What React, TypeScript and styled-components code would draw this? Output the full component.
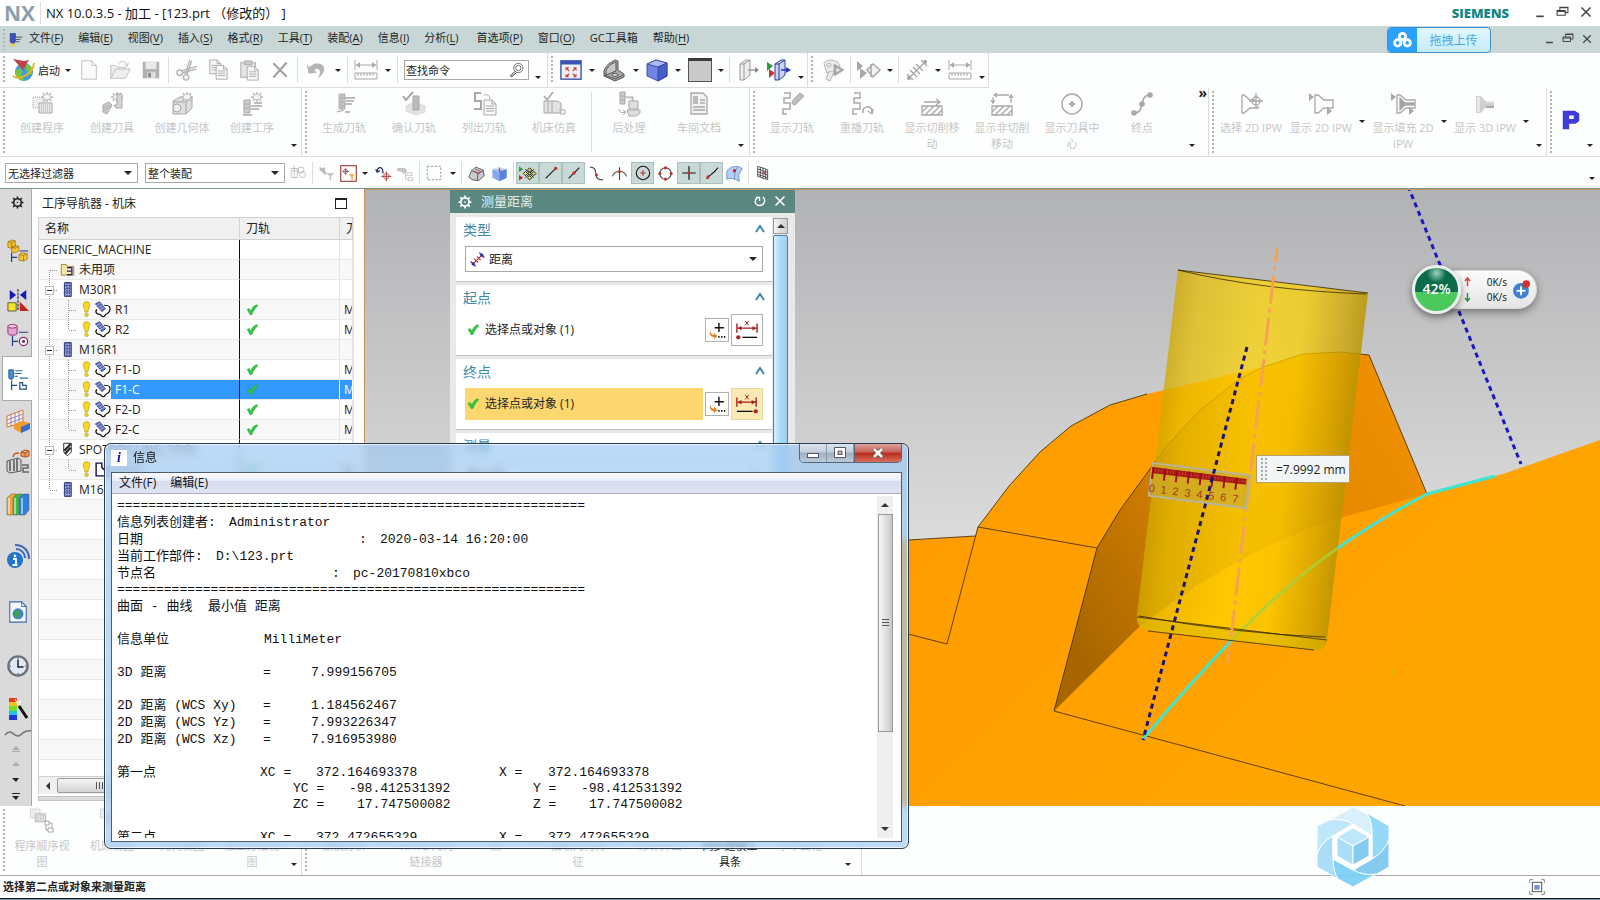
import React from "react";
import styled, { createGlobalStyle, css } from "styled-components";

const ui = `"Open Sans", "Noto Sans CJK SC", sans-serif`;
const mono = `"Liberation Mono", "Noto Sans CJK SC", monospace`;

const Global = createGlobalStyle`
  * { box-sizing: border-box; }
  body { margin: 0; background: #fdfefe; font-family: ${ui}; font-size: 11px; color: #222; overflow: hidden; }
  button, select, input { font-family: inherit; font-size: inherit; color: inherit; }
  button { background: none; border: 0; padding: 0; }
`;

/* ---------- shell ---------- */
const Shell = styled.div`
  display: flex;
  flex-direction: column;
  min-height: 100vh;
`;

const TitleBar = styled.header`
  display: flex;
  align-items: center;
  height: 26px;
  padding-left: 4px;
  background: #fff;
`;
const NxMark = styled.span`
  width: 37px;
  margin-right: 5px;
  border-right: 1px solid #dcdcdc;
  font: 700 21px/22px "Open Sans", sans-serif;
  color: #8c9fb0;
`;
const TitleText = styled.h1`
  flex: 1;
  margin: 0;
  font-size: 13px;
  line-height: 20px;
  font-weight: 400;
  white-space: pre;
  color: #111;
`;
const Brand = styled.span`
  margin-right: 26px;
  font: 800 13px/20px "Open Sans", sans-serif;
  color: #118886;
`;
const WinButtons = styled.div<{ $gap: number }>`
  display: flex;
  align-items: center;
  gap: ${(p) => p.$gap}px;
  padding-right: 8px;
  color: #444;
`;

const MenuBar = styled.nav`
  display: flex;
  align-items: center;
  height: 27px;
  background: #c8d7d6;
`;
const MenuItems = styled.div`
  display: flex;
  flex: 1;
  gap: 15px;
  padding: 0 0 4px 6px;
`;
const MenuItem = styled.button<{ $wide?: boolean }>`
  line-height: 20px;
  white-space: nowrap;
  margin-left: ${(p) => (p.$wide ? 3 : 0)}px;
  u { text-underline-offset: 2px; }
`;
const Upload = styled.button`
  display: flex;
  align-items: center;
  width: 104px;
  height: 26px;
  margin: 1px 54px 0 0;
  border: 1px solid #3c8fd0;
  border-radius: 4px;
  overflow: hidden;
  background: linear-gradient(#e2f7ff, #c6ebfb);
  color: #4aa9dc;
  font-size: 12px;
  span { flex: 1; }
`;
const UploadMark = styled.i`
  display: grid;
  place-items: center;
  width: 29px;
  height: 26px;
  background: #2aa2fb;
`;

/* ---------- toolbars ---------- */
const Bar = styled.div<{ $h: number; $line?: boolean }>`
  display: flex;
  flex-shrink: 0;
  height: ${(p) => p.$h}px;
  border-bottom: ${(p) => (p.$line ? "1px solid #dedede" : "0")};
`;
const Group = styled.div<{ $line?: boolean }>`
  display: flex;
  align-items: center;
  border-right: 1px solid #dcdcdc;
  border-bottom: ${(p) => (p.$line ? "1px solid #dcdcdc" : "0")};
`;
const Grip = styled.i<{ $w?: number }>`
  align-self: stretch;
  width: ${(p) => p.$w ?? 9}px;
  margin: 3px 0;
  background: repeating-linear-gradient(#b4b4b4 0 2px, transparent 2px 4px) 3px 0 / 2px 100% no-repeat;
`;
const Tool = styled.button<{ $w?: number; $on?: boolean }>`
  display: grid;
  place-items: center;
  width: ${(p) => p.$w ?? 31}px;
  height: 24px;
  ${(p) =>
    p.$on &&
    css`
      height: 22px;
      background: #c9d9d8;
      border: 1px solid #a9c2c0;
    `}
`;
const Launch = styled.button`
  display: flex;
  align-items: center;
  width: 64px;
  padding-left: 2px;
  gap: 3px;
  white-space: nowrap;
`;
const Sep = styled.i<{ $w?: number }>`
  align-self: stretch;
  width: 1px;
  margin: 4px ${(p) => p.$w ?? 2}px;
  background: #dcdcdc;
`;
const Drop = styled.button<{ $w?: number; $low?: boolean }>`
  display: flex;
  justify-content: center;
  align-self: ${(p) => (p.$low ? "flex-end" : "center")};
  width: ${(p) => p.$w ?? 12}px;
  padding-bottom: ${(p) => (p.$low ? 8 : 0)}px;
  &::before {
    content: "";
    border: solid transparent;
    border-width: 3px 3px 0;
    border-top-color: #222;
  }
`;
const Search = styled.label`
  display: flex;
  align-items: center;
  width: 125px;
  height: 20px;
  margin-left: 4px;
  border: 1px solid #a8a8a8;
  background: #fff;
  input { width: 104px; border: 0; padding: 0 1px; outline: 0; background: none; }
  input::placeholder { color: #222; opacity: 1; }
`;

const Feature = styled.button<{ $dark?: boolean }>`
  display: flex;
  flex-direction: column;
  align-items: center;
  align-self: flex-start;
  width: 70px;
  padding: 4px 3px 0;
  gap: 4px;
  line-height: 16px;
  color: ${(p) => (p.$dark ? "#222" : "#c6c6c6")};
`;
const SideDrop = styled(Drop)`
  align-self: flex-start;
  padding-top: 32px;
`;
const GroupEnd = styled.div<{ $w: number }>`
  display: flex;
  flex-direction: column;
  align-self: stretch;
  justify-content: space-between;
  align-items: flex-end;
  width: ${(p) => p.$w}px;
  padding: 0 1px 9px 0;
  font: 700 14px/10px "Open Sans", sans-serif;
`;
const Macro = styled.button`
  align-self: flex-start;
  width: 20px;
  padding-top: 21px;
  margin-left: 6px;
`;

const Combo = styled.label<{ $w: number; $h: number; $gap?: boolean }>`
  display: flex;
  align-items: center;
  width: ${(p) => p.$w}px;
  height: ${(p) => p.$h}px;
  margin-left: ${(p) => (p.$gap ? 7 : 0)}px;
  border: 1px solid #a8a8a8;
  background: #fff;
  select {
    flex: 1;
    height: 100%;
    padding: 0 2px;
    border: 0;
    outline: 0;
    appearance: none;
    background: none;
  }
  svg { margin: 0 2px 0 4px; }
  &::after {
    content: "";
    margin-right: 5px;
    border: solid transparent;
    border-width: 4px 4px 0;
    border-top-color: #222;
  }
`;
const TypeCombo = styled(Combo)`
  font-size: 12px;
`;
const SelectBar = styled(Bar)`
  align-items: center;
  padding: 1px 2px 0 5px;
`;
const Push = styled.i`
  flex: 1;
`;

/* ---------- main area ---------- */
const Main = styled.main`
  position: relative;
  display: flex;
  flex: 1;
  min-height: 0;
  border-top: 1px solid #7d9490;
`;
const Rail = styled.aside`
  display: flex;
  flex-direction: column;
  width: 32px;
  background: #dadada;
  border-right: 1px solid #a9a9a9;
`;
const RailTab = styled.button<{ $h: number; $on?: boolean }>`
  display: grid;
  place-items: center;
  height: ${(p) => p.$h}px;
  padding-left: 4px;
  ${(p) =>
    p.$on &&
    css`
      margin: 0 -1px 0 2px;
      padding-left: 0;
      background: #fff;
      border: solid #a9a9a9;
      border-width: 1px 0 1px 1px;
    `}
`;
const Navigator = styled.section`
  display: flex;
  flex-direction: column;
  width: 332px;
  padding: 0 10px 5px 6px;
  background: #fff;
`;
const NavTitle = styled.h2`
  display: flex;
  align-items: center;
  justify-content: space-between;
  height: 28px;
  margin: 0;
  padding: 0 7px 0 4px;
  font-size: 12px;
  font-weight: 400;
  i { width: 12px; height: 11px; border: 1px solid #222; border-top-width: 2px; }
`;
const TreeBox = styled.div`
  flex: 1;
  overflow: hidden;
  border: 1px solid #d0d0d0;
  border-right-color: #e2e2e2;
`;
const Tree = styled.table`
  width: 100%;
  table-layout: fixed;
  border-collapse: separate;
  border-spacing: 0;
  font-size: 12px;
  line-height: 19px;
  th {
    height: 22px;
    padding: 0 6px;
    background: #f0f0f0;
    border-right: 1px solid #d4d4d4;
    border-bottom: 1px solid #d0d0d0;
    font-weight: 400;
    text-align: left;
    overflow: hidden;
    white-space: nowrap;
  }
  td {
    height: 20px;
    padding: 0;
    border-bottom: 1px solid #e9e9e9;
    border-right: 1px solid #e4e4e4;
    overflow: hidden;
    white-space: nowrap;
  }
  td:first-child { border-right: 1px solid #111; }
  tr:nth-child(even) td { background: #f8f8f8; }
`;
const TreeRow = styled.tr<{ $sel?: boolean }>`
  ${(p) =>
    p.$sel &&
    css`
      && td + td { background: #3399ff; color: #fff; border-right-color: #fff; }
    `}
`;
const NodeCell = styled.div`
  display: flex;
  align-items: center;
  height: 19px;
`;
const CheckCell = styled(NodeCell)`
  padding-left: 6px;
`;
const NodeLabel = styled.span<{ $sel?: boolean }>`
  flex: 1;
  padding: 0 4px;
  background: ${(p) => (p.$sel ? "#3399ff" : "transparent")};
  color: ${(p) => (p.$sel ? "#fff" : "#222")};
`;
const HScroll = styled.div`
  display: flex;
  align-items: center;
  height: 17px;
  background: #f0f0f0;
  border: 1px solid #d0d0d0;
  border-width: 0 1px;
  i {
    width: 18px;
    display: flex;
    justify-content: center;
  }
  i::before {
    content: "";
    border: solid transparent;
    border-width: 4px 4px 4px 0;
    border-right-color: #333;
  }
  b {
    display: grid;
    place-items: center;
    width: 84px;
    height: 15px;
    border: 1px solid #9a9a9a;
    border-radius: 2px;
    background: linear-gradient(#f6f6f6, #d2d2d2);
  }
  b::before {
    content: "";
    width: 7px;
    height: 7px;
    background: repeating-linear-gradient(90deg, #555 0 1px, transparent 1px 3px);
  }
`;
const NavFoot = styled.div`
  height: 5px;
  margin-top: 2px;
  background: #dcdcdc;
  border: 1px solid #c2c2c2;
`;

const Viewport = styled.section`
  position: relative;
  flex: 1;
  overflow: hidden;
  border-left: 1px solid #c8945c;
  border-top: 1px solid #c8945c;
  background: linear-gradient(#b1b2b4, #dedede 60%);
`;
const Scene = styled.svg`
  display: block;
  position: absolute;
  width: 100%;
  height: 100%;
`;
const Readout = styled.output`
  position: absolute;
  top: 265px;
  right: 250px;
  display: flex;
  align-items: center;
  gap: 8px;
  width: 94px;
  height: 28px;
  padding-left: 3px;
  border: 1px solid #b4a070;
  background: #f2f5f6;
  font-size: 12px;
  white-space: nowrap;
  i { width: 8px; height: 24px; background: radial-gradient(circle, #aaa 1px, transparent 1px) 0 0 / 4px 4px; }
`;
const NetWidget = styled.div`
  position: absolute;
  top: 80px;
  right: 63px;
  display: flex;
  align-items: center;
  width: 102px;
  height: 39px;
  padding: 0 6px 0 28px;
  border: 1px solid #d8d8d8;
  border-radius: 20px;
  background: linear-gradient(#fcfcfc, #e4e4e4);
  box-shadow: 0 3px 8px rgba(0, 0, 0, 0.4);
`;
const Ball = styled.strong`
  position: absolute;
  left: -24px;
  top: -6px;
  width: 49px;
  height: 49px;
  border: 3px solid #eaf2ec;
  border-radius: 50%;
  background: radial-gradient(circle at 50% 12%, #9fd4bd 0, transparent 22%), linear-gradient(#0b6b4a 0 56%, #4cc95d 56%);
  box-shadow: 0 3px 7px rgba(0, 0, 0, 0.45);
  color: #fff;
  font: 600 14px/42px "Open Sans", sans-serif;
  text-align: center;
`;
const Rates = styled.div`
  flex: 1;
  font-size: 10px;
  line-height: 15px;
  color: #111;
  div { display: flex; justify-content: space-between; padding-right: 5px; }
`;

/* ---------- measure dialog ---------- */
const Dialog = styled.section`
  position: absolute;
  left: 85px;
  top: 0;
  width: 345px;
  height: 330px;
  display: flex;
  flex-direction: column;
  background: #e9e9e9;
`;
const DialogTitle = styled.h2`
  display: flex;
  align-items: center;
  height: 23px;
  margin: 0;
  padding: 0 9px 0 8px;
  gap: 8px;
  background: #5b8781;
  color: #fff;
  font-size: 13px;
  line-height: 20px;
  font-weight: 400;
  span { flex: 1; color: #e4eeec; padding: 0 0 2px 1px; }
`;
const DialogBody = styled.div`
  display: flex;
  flex: 1;
  min-height: 0;
  padding: 4px 7px 0 6px;
`;
const Sections = styled.div`
  display: flex;
  flex: 1;
  flex-direction: column;
  gap: 3px;
  margin-right: 1px;
`;
const Section = styled.div<{ $h: number }>`
  flex-shrink: 0;
  height: ${(p) => p.$h}px;
  padding: 0 9px;
  background: #fff;
  border-bottom: 1px solid #c2c2c2;
`;
const SectionHead = styled.h3`
  display: flex;
  justify-content: space-between;
  align-items: center;
  height: 24px;
  margin: 0 -3px 5px -2px;
  font-size: 14px;
  font-weight: 400;
  color: #3f87a8;
`;
const PickRow = styled.div`
  display: flex;
  align-items: center;
  gap: 2px;
  height: 32px;
`;
const Pick = styled.button<{ $on?: boolean }>`
  display: flex;
  align-items: center;
  flex: 1;
  gap: 5px;
  height: 32px;
  padding: 0 0 2px 2px;
  background: ${(p) => (p.$on ? "#fcd770" : "none")};
  font-size: 12px;
`;
const BoxButton = styled.button<{ $s: number; $on?: boolean }>`
  display: grid;
  place-items: center;
  width: ${(p) => p.$s}px;
  height: ${(p) => p.$s}px;
  border: 1px solid ${(p) => (p.$on ? "#e8d9a0" : "#b0b0b0")};
  background: ${(p) => (p.$on ? "#f9eab5" : "#fff")};
`;
const Arrow = styled.i<{ $down?: boolean }>`
  display: grid;
  place-items: center;
  &::before {
    content: "";
    border: solid transparent;
    border-width: ${(p) => (p.$down ? "4px 4px 0" : "0 4px 4px")};
    border-top-color: ${(p) => (p.$down ? "#333" : "transparent")};
    border-bottom-color: ${(p) => (p.$down ? "transparent" : "#333")};
  }
`;
const DialogScroll = styled.div`
  width: 15px;
  display: flex;
  flex-direction: column;
  gap: 1px;
  padding-top: 1px;
  ${Arrow} { height: 16px; border: 1px solid #9a9a9a; background: linear-gradient(90deg, #f4f4f4, #cfcfcf); }
  b { flex: 1; border: 1px solid #49809f; border-radius: 2px; background: linear-gradient(90deg, #d8f0fc, #a6dcf7 50%, #a2d0ee); }
`;

/* ---------- information window ---------- */
const InfoWindow = styled.section`
  position: absolute;
  left: 104px;
  top: 254px;
  z-index: 5;
  display: flex;
  flex-direction: column;
  width: 805px;
  height: 406px;
  padding: 0 6px 6px;
  border: 1px solid #2a3b4d;
  border-radius: 7px;
  background: rgba(158, 200, 242, 0.68);
  backdrop-filter: blur(4px);
  box-shadow: inset 0 0 0 1px rgba(255, 255, 255, 0.7);
`;
const InfoTitle = styled.h2`
  display: flex;
  align-items: center;
  height: 28px;
  margin: 0;
  gap: 6px;
  font-size: 12px;
  font-weight: 400;
  color: #111;
  em { width: 16px; height: 16px; background: #fff; color: #1414b0; font: italic 700 14px/15px "Liberation Serif", serif; text-align: center; }
  span { flex: 1; padding-bottom: 2px; }
`;
const Caption = styled.div`
  display: flex;
  align-self: flex-start;
  border: 1px solid #55677a;
  border-top: 0;
  border-radius: 0 0 5px 5px;
  overflow: hidden;
`;
const CaptionButton = styled.button<{ $close?: boolean }>`
  display: grid;
  place-items: center;
  width: ${(p) => (p.$close ? 47 : 27)}px;
  height: 18px;
  border-left: ${(p) => (p.$close ? 1 : 0)}px solid #55677a;
  border-right: ${(p) => (p.$close ? 0 : 1)}px solid #8a9aaa;
  background: ${(p) =>
    p.$close ? "linear-gradient(#dca19a, #c8635a 45%, #b62c1c 50%, #d8705c)" : "linear-gradient(#dbe4ee, #c2cedb 45%, #9fb0c2 50%, #bccad8)"};
`;
const InfoFrame = styled.div`
  display: flex;
  flex: 1;
  flex-direction: column;
  min-height: 0;
  border: 1px solid #4b5d6e;
  background: #fff;
`;
const InfoMenu = styled.nav`
  display: flex;
  gap: 14px;
  height: 21px;
  padding-left: 7px;
  border-bottom: 1px solid #a8adb8;
  background: linear-gradient(#fbfcfe, #e8ecf7 40%, #d6dcee 42%, #e0e5f4);
  font-size: 12px;
  color: #111;
  button { line-height: 20px; }
`;
const InfoBody = styled.div`
  display: flex;
  flex: 1;
  min-height: 0;
  padding: 2px 8px 3px 5px;
`;
const Listing = styled.div`
  flex: 1;
  overflow: hidden;
  font-family: ${mono};
  font-size: 13px;
  color: #111;
  padding-top: 2px;
`;
const Line = styled.div<{ $h: number }>`
  display: flex;
  height: ${(p) => p.$h}px;
  line-height: ${(p) => p.$h}px;
  white-space: pre;
`;
const Col = styled.span<{ $w: number }>`
  flex-shrink: 0;
  width: ${(p) => p.$w}px;
`;
const InfoScroll = styled.div`
  display: flex;
  flex-direction: column;
  align-items: center;
  width: 16px;
  background: #efefef;
  ${Arrow} { height: 18px; }
  b {
    display: grid;
    place-items: center;
    width: 15px;
    height: 218px;
    border: 1px solid #999;
    background: linear-gradient(90deg, #f6f6f6, #dcdcdc 60%, #c4c4c4);
  }
  b::before { content: ""; width: 7px; height: 8px; background: repeating-linear-gradient(#555 0 1px, transparent 1px 3px); }
`;

/* ---------- footer ---------- */
const Footer = styled.footer`
  position: relative;
`;
const BottomBar = styled(Bar)`
  border-bottom: 1px solid #ababab;
`;
const Status = styled.div`
  display: flex;
  align-items: center;
  justify-content: space-between;
  height: 22px;
  padding: 0 55px 0 3px;
  font-weight: 600;
`;
const StatusText = styled.span`
  padding-bottom: 2px;
`;
const TaskEdge = styled.div`
  height: 2px;
  border-top: 1px solid #0c1622;
  background: #7e97ac;
`;
const HexMark = styled.svg`
  position: absolute;
  right: 210px;
  top: 0;
  z-index: 2;
  opacity: 0.9;
`;

/* ---------- icons ---------- */
const G = "#a8a8a8";
const L = "#dadada";
type IconProps = { n: string; s?: number };

const star = <path d="M12 1l1 3 3-2-1 3 3 1-3 1 1 3-3-2-1 3-1-3-3 2 1-3-3-1 3-1-1-3 3 2z" fill="#f4f4f4" stroke={G} strokeWidth=".7" />;
const starR = <g transform="translate(5 -1)">{star}</g>;
const squig = <path d="M4 1h6v5H4v5h6v6H3v5h4" fill="none" stroke={G} strokeWidth="1.5" />;
const cutter = <path d="M7 2h6v15H7z M7 6h6M7 10h6M7 14h6M10 2v15" fill="#c8c8c8" stroke={G} strokeWidth=".8" />;
const spin = <path d="M3 3h3l6 5h9v8h-9l-6 5H3z" />;
const tick = <path d="M2 12l4-2 3 5c2-6 6-11 11-12l2 2c-5 4-8 9-11 16l-3 1z" />;
const tri = (x: number, y: number) => <path d={`M${x} ${y}l5 4-5 4z`} fill={G} />;
const chip = (
  <g>
    <rect x="3" y="5" width="12" height="11" fill="#eee" stroke={G} strokeDasharray="1 1" />
    <path d="M9 11h13v10H9z" fill="#e8e8e8" stroke={G} />
    <path d="M11 13h9M11 15h9M11 17h9M11 19h9" stroke={G} strokeDasharray="1 1" />
  </g>
);
const doc = (x: number, y: number) => (
  <g transform={`translate(${x} ${y})`}>
    <path d="M1 1h8l4 4v11H1z" fill="#f7f7f7" stroke={G} />
    <path d="M9 1v4h4M3 7h8M3 9.500h8M3 12h8" fill="none" stroke={G} />
  </g>
);
const ruler = (
  <g fill="none" stroke={G}>
    <path d="M1 2v10M23 2v10M2 7h20" />
    <path d="M2 7l4-3v6zM22 7l-4-3v6z" fill={G} stroke="none" />
    <path d="M1 15h22v6H1zM4 15v3M7 15v3M10 15v3M13 15v3M16 15v3M19 15v3" />
  </g>
);
const rungs = (
  <g fill="none" stroke={G} strokeWidth="1.300">
    <path d="M3 21L21 3M2 16l6 6M16 2l6 6M5 12l7 7M8 9l7 7M11 6l7 7" />
    <circle cx="4" cy="20" r="1.500" fill={G} />
    <circle cx="20" cy="4" r="1.500" fill={G} />
  </g>
);

const art: Record<string, React.ReactNode> = {
  globe: (
    <g>
      <circle cx="13" cy="14" r="9" fill="#3f9ed8" />
      <path d="M6 11c4-1 6 2 5 5s3 4 2 7c-5 0-8-4-9-8zM15 6c5 1 8 6 6 11-3 0-4-4-6-5z" fill="#7ac142" />
      <path d="M2 1l11 2 5-1-6 10z" fill="#c4424c" />
      <path d="M2 18c7 5 20-2 21-13" fill="none" stroke="#e9b52c" strokeWidth="2" />
    </g>
  ),
  newdoc: <path d="M4 2h11l5 5v15H4zM15 2v5h5" fill="#fbfbfb" stroke="#bcbcbc" />,
  open: <g stroke="#bcbcbc" fill="#eee"><path d="M2 21V7h5l2 2h9v3" /><path d="M2 21l5-10h16l-5 10z" /><path d="M10 5c4-4 9-3 10 3M20 8l-3-2M20 8l1-4" fill="none" /></g>,
  save: <g><path d="M3 3h18v18H3z" fill="#b0b0b0" /><path d="M6 3h12v8H6z" fill="#e9e9e9" /><path d="M8 14h9v7H8z" fill="#ddd" /><path d="M9 15h3v5H9z" fill="#888" /></g>,
  cut: <g fill="none" stroke="#b4b4b4" strokeWidth="1.500"><circle cx="4" cy="15" r="3" /><circle cx="11" cy="20" r="3" /><path d="M6 13L23 8M10 17L15 1M7 15l15-4M12 17l5-15" /></g>,
  copy: <g>{doc(2, 0)}{doc(9, 6)}</g>,
  paste: <g><path d="M3 4h16v16H3z" fill="#e4e4e4" stroke={G} /><path d="M7 2h8v4H7z" fill="#ccc" stroke={G} />{doc(9, 7)}</g>,
  del: <path d="M4 4l16 16M20 3L4 21" stroke="#a2a2a2" strokeWidth="2.500" />,
  undo: <path d="M2 6l2 10 9-1-3-3c5-4 9 1 4 9 10-6 9-17-2-16-3 0-5 2-7 4z" fill="#b4b4b4" />,
  ruler,
  rungs,
  lens: <g fill="none" stroke="#333"><circle cx="14" cy="9" r="7" /><circle cx="14" cy="9" r="4" /><path d="M9 14l-7 7 2 1 7-6" strokeWidth="1.500" /></g>,
  fit: (
    <g>
      <rect x="1" y="2" width="22" height="20" fill="#eef1fb" stroke="#3a4fa8" strokeWidth="1.500" />
      <path d="M1 2h22v4H1z" fill="#3a56b4" />
      <path d="M6 9h4l-1.500 1.500 2 2-1 1-2-2L6 13zM18 9h-4l1.500 1.500-2 2 1 1 2-2L18 13zM6 20h4l-1.500-1.500 2-2-1-1-2 2L6 16zM18 20h-4l1.500-1.500-2-2 1-1 2 2L18 16z" fill="#c8472e" />
    </g>
  ),
  bracket: <g stroke="#555" strokeLinejoin="round"><path d="M2 13C3 8 9 4 13 2l3 1v9l6 4v3l-9 4-11-5z" fill="#a9a9a9" /><path d="M4 13C5 9 10 5 14 4v9l-10 4z" fill="#c8c8c8" /><path d="M2 17l11 4 8-4" fill="none" /><ellipse cx="13" cy="17" rx="3" ry="1.500" fill="#ddd" /></g>,
  cube: <g stroke="#2b3c9a" strokeWidth=".8"><path d="M2 6l9-4 11 3v13l-9 5L2 18z" fill="#6f86e0" /><path d="M2 6l11 3 9-4-11-3z" fill="#aebcf4" /><path d="M13 9v14l9-5V5z" fill="#4660c8" /></g>,
  screen: <g><rect x=".5" y=".5" width="23" height="23" fill="#c9c9c9" stroke="#555" /><path d="M0 0h24v3H0z" fill="#3c3c3c" /></g>,
  door: <g fill="#eee" stroke="#999"><path d="M4 6l6-4h4v15l-6 5H4z" /><path d="M4 6h4v16M8 6l6-4" fill="none" /><path d="M12 12h8" fill="none" strokeWidth="1.500" /><path d="M19 9l4 3-4 3z" fill="#888" stroke="none" /></g>,
  door2: <g><path d="M8 6l6-4h4v15l-6 5H8z" fill="#c7d4f4" stroke="#2c3c90" /><path d="M8 6h4v16M12 6l6-4" fill="none" stroke="#2c3c90" /><path d="M14 12h6" fill="none" stroke="#3030c0" strokeWidth="1.500" /><path d="M19 9l5 3-5 3z" fill="#3030c0" /><path d="M0 4l6 4-6 5z" fill="#2e9a3e" /><path d="M2 11l6 4-6 5z" fill="#c83a2a" /></g>,
  gauge: <g fill="#ececec" stroke="#b4b4b4"><path d="M3 6c0-5 14-6 16 2l-2 7-6-2-5 2zM8 13l-3 8 4 2 4-9" /><circle cx="8" cy="7" r="2" /><path d="M13 6l10 6-10 6z" fill="#999" /><path d="M15 9l5 3-5 3z" /></g>,
  flip: <g><path d="M0 3l6 5-6 5zM3 10l7 5-7 6z" fill={G} /><path d="M10 12l6-6 7 6-7 7zM14 6v13" fill="#f2f2f2" stroke={G} strokeWidth="1.500" /></g>,
  bridge: (
    <g strokeWidth="2" fill="none">
      <path d="M5 19L19 5M7 11l6 6M11 7l6 6" stroke="#c0283a" strokeWidth="1.700" />
      <path d="M1 15l8 8M15 1l8 8" stroke="#2b2b9a" />
      <circle cx="5" cy="19" r="2.500" fill="#2b2b9a" />
      <circle cx="19" cy="5" r="2.500" fill="#2b2b9a" />
    </g>
  ),
  prog: <g>{chip}{starR}</g>,
  toolnew: <g>{starR}<path d="M3 13l6-3 3 3-5 9-4-2zM4 16l5-3M4 19l7-5" fill="#ccc" stroke={G} /><path d="M17 2h5v14h-6l-2-3h3z" fill="#d5d5d5" stroke={G} /></g>,
  geom: <g><path d="M3 9l7-4h12v11l-6 6H3z" fill="#ddd" stroke={G} /><path d="M16 10v12M16 10l6-5M3 10h13" fill="none" stroke={G} /><circle cx="7" cy="16" r="4" fill="#eee" stroke={G} />{starR}</g>,
  opnew: <g><path d="M4 8h6v13H4zM4 12h6M4 16h6" fill="#ccc" stroke={G} />{starR}<path d="M11 14h11M11 17h8M14 11h8M3 23h9" stroke={G} strokeWidth="1.300" /></g>,
  gen: <g>{cutter}<path d="M13 6h10M14 9h8M13 12h7M5 20l7-2M13 20h5" stroke={G} strokeWidth="1.300" /></g>,
  verify: <g><path d="M1 4l3 4L11 0" fill="none" stroke={G} strokeWidth="2" /><path d="M4 14l8-4 11 4v6l-9 3-10-4z" fill="#e2e2e2" stroke={L} /><path d="M11 4h6v14h-6z" fill="#bbb" stroke={G} /></g>,
  list: <g><path d="M9 1H3v8h6v8H2" fill="none" stroke={G} strokeWidth="2" />{doc(11, 7)}<path d="M12 3c4-1 6 1 6 4" fill="none" stroke={G} /></g>,
  sim: <g><path d="M2 4l3 4 6-8" fill="none" stroke={G} strokeWidth="1.600" /><path d="M2 9h13l4 2v10H2z" fill="#e2e2e2" stroke={G} /><path d="M6 9v12M10 9v12M17 18h6v4h-5" fill="none" stroke={G} /></g>,
  post: <g><path d="M3 0h5v12H3zM3 4h5M3 8h5" fill="#ccc" stroke={G} /><path d="M8 5h8v4M12 9h9v8h-9z M10 18h13v3l-4 3h-7z" fill="#dedede" stroke={G} /><path d="M2 17c1 4 3 4 6 3M6 18l3 2-3 3" fill="none" stroke={G} /></g>,
  shop: <g><path d="M4 1h12l4 4v17H4z" fill="#f2f2f2" stroke={G} strokeWidth="1.300" /><path d="M6 4h5v8H6z" fill="#bbb" /><path d="M13 8h5M13 11h5M6 15h12M6 18h12" stroke={G} strokeWidth="1.300" /></g>,
  torch: <g>{squig}<path d="M12 10l3-4 5-5 4 3-5 5-4 4c-2 0-3-1-3-3z" fill="#bdbdbd" stroke={G} /></g>,
  replay: <g>{squig}<path d="M13 21c-2-7 9-9 9-1M22 22l-4-3M22 22l1-5" fill="none" stroke={G} strokeWidth="1.500" /></g>,
  hatch: <g fill="none" stroke={G} strokeWidth="1.300"><path d="M4 10h15M16 7l4 3-4 3M2 14h20v9H2zM2 20l6-6M5 23l9-9M11 23l9-9M17 23l5-5" /></g>,
  hatch2: <g fill="none" stroke={G} strokeWidth="1.300"><path d="M2 14h20v9H2zM2 20l6-6M5 23l9-9M11 23l9-9M17 23l5-5M4 3h15M3 5v6M1 8l2 3 2-3M21 11V4M19 6l2-3 2 3M7 1L4 3l3 2" /></g>,
  center: <g fill="none" stroke={G} strokeWidth="1.400"><circle cx="12" cy="12" r="10" /><path d="M12 9v6M9 12h6" strokeWidth="2" /></g>,
  endpt: <g fill="none" stroke={G} strokeWidth="1.600"><path d="M4 21c12 0 4-18 16-18" /><circle cx="4" cy="21" r="2" fill={G} /><circle cx="12" cy="12" r="2" fill={G} /><circle cx="20" cy="3" r="2" fill={G} /></g>,
  ipwsel: <g fill="none" stroke={G} strokeWidth="1.300"><path d="M3 3h2l6 5h5M3 3v18h2l6-5h8v-2" /><circle cx="17" cy="9" r="4" /><path d="M17 1v16M10 9h14" /></g>,
  ipw: <g>{tri(0, 1)}<g fill="#fff" stroke={G} strokeWidth="1.300" transform="translate(3 0)">{spin}</g>{tri(18, 15)}</g>,
  ipwfill: <g>{tri(0, 1)}<g fill="#fff" stroke={G} strokeWidth="1.300" transform="translate(3 0)">{spin}<path d="M6 6l5 5h9v2h-9l-5 5z" fill="#a0a0a0" /></g>{tri(18, 15)}</g>,
  ipw3d: <g><path d="M3 4h4c3 0 3 5 6 5h8v7h-8c-3 0-3 5-6 5H3z" fill="#cfcfcf" /><path d="M13 9h8v2h-8zM4 5h3v15H4z" fill="#e6e6e6" /><path d="M13 14h8v2h-8z" fill="#aaa" /></g>,
  macro: <path fillRule="evenodd" d="M3 2h13l5 3v8l-4 3h-7v6H3zM10 7v4h5V7z" fill="#3f3bd6" />,
  asm: <g fill="none" stroke="#b0b0b0"><path d="M3 9h8v9H3zM7 2v16M2 6h10v6" /><circle cx="16" cy="8" r="4" /><circle cx="18" cy="14" r="4" /></g>,
  hand: <g><path d="M1 3l4 2 4-2v7l3 2-3 3-5-5-3-2z" fill="#bdbdbd" /><path d="M11 12h12l-5 5v6h-2v-6z" fill="#c4c4c4" /></g>,
  pickbox: <g><rect x="1" y="1" width="22" height="22" fill="#fff" stroke="#9e3a3a" strokeWidth="1.600" /><path d="M8 4v10M3 9h10" stroke="#444" /><circle cx="8" cy="9" r="3" fill="none" stroke="#b04040" /><path d="M12 13h9l-3 4v4h-2v-4z" fill="#f0b040" /></g>,
  retarget: <g fill="none"><path d="M11 12C12 2 4 1 3 9M1 6l2 4 4-2" stroke="#2a2f66" strokeWidth="1.800" /><circle cx="16" cy="16" r="4" stroke="#b03030" /><path d="M16 9v14M9 16h14" stroke="#b03030" strokeWidth="1.400" /></g>,
  trail: <g fill="#c8c8c8" stroke="#b4b4b4"><path d="M1 5h10l3 3-5 4-2-3-6-1z" /><path d="M14 11h7v4h-7zM16 18h6v4h-6zM12 8v12h4" fill="none" /></g>,
  lasso: <rect x="3" y="3" width="18" height="18" fill="none" stroke="#777" strokeDasharray="3 2" />,
  shaded: <g stroke="#333"><path d="M1 17l4-9 6-5 10 4 2 8-8 7-9-1z" fill="#c9c9cf" /><path d="M5 8l9 4-1 10M14 12l8-4" fill="none" /><path d="M10 6l8 3M9 9l8 3" stroke="#b03040" /></g>,
  bluecube: <g><path d="M2 6l9-3 11 3v12l-10 5L2 18z" fill="#86a8ec" /><path d="M2 6l10 3 10-3-11-3z" fill="#cfe0fb" /><path d="M12 9v14l10-5V6z" fill="#5b82da" /><path d="M12 4v6M9 7h6" stroke="#b03030" /></g>,
  snapall: (
    <g>
      <path d="M0 2l6 4-6 4z" fill="#2f9b3a" />
      <path d="M0 14l6 4-6 4z" fill="#b93025" />
      <g fill="#f4dc50" stroke="#222" strokeWidth="1.400">
        <path d="M15 4l3 3-3 3-3-3zM15 15l3 3-3 3-3-3zM9 9l3 3-3 3-3-3zM21 9l3 3-3 3-3-3z" />
        <path d="M9 6l12 12M21 6L9 18" />
        <circle cx="15" cy="12" r="2" />
      </g>
    </g>
  ),
  snapend: <g><path d="M4 20L19 5" stroke="#111" strokeWidth="1.600" /><circle cx="19" cy="5" r="2.500" fill="#c03028" /></g>,
  snapmid: <g><path d="M4 20L20 4" stroke="#111" strokeWidth="1.600" /><circle cx="12" cy="12" r="2.500" fill="#c03028" /></g>,
  snapctl: <g><path d="M3 3c6 0 8 3 8 9s3 9 10 9" stroke="#444" fill="none" strokeWidth="1.500" /><circle cx="12" cy="14" r="2" fill="#c03028" /></g>,
  snapint: <g><path d="M12 3v18M2 16c3-9 17-9 20 0" stroke="#444" fill="none" strokeWidth="1.500" /><circle cx="12" cy="9" r="2" fill="#c03028" /></g>,
  snaparc: <g><circle cx="12" cy="12" r="10" stroke="#111" fill="none" strokeWidth="1.600" /><path d="M12 8v8M8 12h8" stroke="#c03028" strokeWidth="1.800" /></g>,
  snapquad: <g><circle cx="12" cy="12" r="8" stroke="#444" fill="none" strokeWidth="1.500" /><g fill="#c03028"><circle cx="12" cy="4" r="2.200" /><circle cx="12" cy="20" r="2.200" /><circle cx="4" cy="12" r="2.200" /><circle cx="20" cy="12" r="2.200" /></g></g>,
  snappt: <g><path d="M12 2v20M2 12h20" stroke="#111" strokeWidth="1.800" /><circle cx="12" cy="12" r="2.200" fill="#c03028" /></g>,
  snapcrv: <g><path d="M4 21c3-6 9-6 17-17" stroke="#111" strokeWidth="1.600" fill="none" /><circle cx="6" cy="18" r="2.500" fill="#c03028" /></g>,
  snapface: <g><path d="M1 10C4 2 12 2 17 2l6 3-5 9c0 4 1 6 1 9l-7-3c-4-2-8-1-11 0z" fill="#b4cdf2" stroke="#5b7db8" /><path d="M17 2c-5 4-5 14-5 18" fill="none" stroke="#5b7db8" /><circle cx="12" cy="8" r="2.500" fill="#c03028" /></g>,
  snapgrid: <g fill="none" stroke="#333" strokeWidth="1.200"><path d="M4 2l15 5v15L4 17zM4 6l15 5M4 10l15 5M4 14l15 5M8 3v15M12 4v16M16 6v15" /><circle cx="14" cy="12" r="2" fill="#c44" stroke="none" /></g>,
  gear: <g fill="none" stroke="currentColor"><circle cx="12" cy="12" r="7" strokeWidth="3" /><path d="M12 1v4M12 19v4M1 12h4M19 12h4M4 4l3 3M17 17l3 3M20 4l-3 3M4 20l3-3" strokeWidth="3" /><circle cx="12" cy="12" r="1.500" fill="currentColor" stroke="none" /></g>,
  asmnav: <g><g fill="#f3c332" stroke="#9a7410" strokeWidth=".8"><path d="M1 2l4-2 4 1v6l-4 2-4-1zM5 8l4-2 4 1v5l-4 2-4-1zM13 16l3-2 6 1v6l-4 2-5-1z" /><path d="M1 2l4 1 4-2M5 3v6M5 8l4 1 4-2M13 16l5 1 4-2M18 17v6" fill="none" /></g><path d="M5 14v10M5 19h6M14 12h9" stroke="#223a8c" strokeWidth="1.300" /></g>,
  constr: <g><path d="M3 1v11l7-5.500zM21 1v11l-7-5.500z" fill="#1b1bb4" /><path d="M1 15h9v9H1z" fill="#f6e227" stroke="#554" /><path d="M14 14v10h10z" fill="#c02318" /><path d="M12 0v24" stroke="#333" strokeWidth="1.300" strokeDasharray="3 1" /></g>,
  partnav: <g><path d="M1 2v8c0 3 10 3 10 0V2" fill="#e6a2d0" stroke="#8a2a70" /><ellipse cx="6" cy="2.500" rx="5" ry="2" fill="#f4c8e4" stroke="#8a2a70" /><path d="M6 13v11M6 19h6M13 9h10" stroke="#223a8c" strokeWidth="1.300" /><circle cx="18" cy="19" r="4.500" fill="#fff" stroke="#8a2a70" strokeWidth="1.400" /><circle cx="18" cy="19" r="1.700" fill="#8a2a70" /></g>,
  opnav: <g><path d="M2 2h5v9l-2 2-3-2z" fill="#4b8fd0" stroke="#1f5c9c" /><path d="M9 3h8M8 6h8M8 9h4M14 11h9" stroke="#2a6ab0" strokeWidth="1.300" /><path d="M5 14v10M5 19h6M14 16h3v3h4v4h-7z" fill="none" stroke="#1f4f8c" strokeWidth="1.300" /></g>,
  mtool: <g><path d="M1 7l16-6v13L1 18z" fill="#fff3d8" stroke="#e07a28" /><path d="M1 11l16-6M1 15l16-6M5 5v12M9 4v12M13 2v12" stroke="#7a6ad0" strokeWidth=".8" /><path d="M8 15l8-3 8 2v6l-9 4-7-4z" fill="#f09a30" /><path d="M15 18l9-4v6l-9 4z" fill="#2f6fd0" /></g>,
  machine: <g><path d="M1 11l11-3 3 2v11l-11 2-3-2z" fill="#d8d8d8" stroke="#555" /><path d="M4 11v10M8 10v11M11 9v12" stroke="#555" strokeWidth="1.500" /><path d="M15 2l4-2 4 1v5l-4 1-4-1zM15 2l4 1 4-2M19 3v4" fill="#f49a58" stroke="#b0501a" /><path d="M7 7c1-4 3-4 6-4" fill="none" stroke="#d05a1a" strokeWidth="1.500" /><path d="M16 15h6v3h-5v4h6" fill="none" stroke="#666" strokeWidth="1.500" /></g>,
  books: <g stroke="#555" strokeWidth=".5"><path d="M1 6l4-4h5v16l-4 5H1z" fill="#f0a33c" /><path d="M7 6l4-4h5v16l-4 5H7z" fill="#3fba45" /><path d="M13 6l4-4h6v16l-4 5h-6z" fill="#2f80da" /><path d="M3 6v16M9 6v16M16 6v16" stroke="#fff" strokeWidth="1" /></g>,
  info: <g><circle cx="9" cy="15" r="8" fill="#2273cc" /><circle cx="9" cy="11" r="1.400" fill="#fff" /><path d="M7 14h3v6M6.500 20h5" stroke="#fff" strokeWidth="1.800" fill="none" /><path d="M10 4c5 0 9 4 9 9M9 0c9 0 14 6 14 14" fill="none" stroke="#3b68b8" strokeWidth="2" /></g>,
  page: <g><path d="M3 1h13l5 5v17H3z" fill="#f4f8fd" stroke="#3c6cae" strokeWidth="1.200" /><path d="M16 1v5h5" fill="none" stroke="#3c6cae" /><circle cx="12" cy="14" r="6" fill="#3d86cf" /><path d="M8 12c3-3 6-2 6 1s-3 4-2 6c-4 0-5-4-4-7z" fill="#3fa048" /></g>,
  clock: <g><circle cx="12" cy="12" r="10.500" fill="#dde8f4" stroke="#6a6f78" strokeWidth="2.500" /><path d="M12 5v8h6" fill="none" stroke="#222" strokeWidth="1.600" /><path d="M12 3v1M12 20v1M3 12h1M20 12h1" stroke="#444" strokeWidth="1.500" /></g>,
  visual: <g><path d="M3 1h8v5H3z" fill="#e83a20" /><path d="M3 5h8v4H3z" fill="#f6c01c" /><path d="M3 9h8v5H3z" fill="#72dc2c" /><path d="M3 14h8v4H3z" fill="#22c4e0" /><path d="M3 18h8v5H3z" fill="#2038d8" /><path d="M13 9l8 12" stroke="#111" strokeWidth="3" /><path d="M9 2l2 4 4-2-2 4" fill="none" stroke="#fff" /></g>,
  wave: <path d="M0 13c6-8 9 4 14 0s6-4 10-4" fill="none" stroke="#777" strokeWidth="1.500" />,
  folder: <g><path d="M2 4h8l2 3h10v14H2z" fill="#f6e6a8" stroke="#a08830" strokeWidth="1.500" /><path d="M11 9h8v11h-8M11 14.500h7" fill="none" stroke="#22228c" strokeWidth="2" /></g>,
  holder: <g><path d="M7 1h11v22H7z" fill="#8d9bd4" stroke="#2a3270" strokeWidth="1.500" /><path d="M7 6h11M7 11h11M7 16h11M11 1v22M15 1v22" stroke="#2a3270" strokeWidth="1.500" strokeDasharray="2 2" /></g>,
  drill: <g><path d="M6 2h12v14l-6 6-6-6z" fill="#fff" stroke="#222" strokeWidth="1.500" /><path d="M7 14L17 3M8 19l9-10" stroke="#222" strokeWidth="3.500" /></g>,
  bang: <g fill="#f8d820" stroke="#b09410" strokeWidth="1"><path d="M7 2c2-3 8-3 10 0 1 4-2 9-3 14h-4c-1-5-4-10-3-14z" /><circle cx="12" cy="20.500" r="2.800" /></g>,
  mill: <g><path d="M4 12c-4 5 2 7 4 7s3 4 6 3c2-1 1-3 4-4s6-6 4-10c-2-2-5-2-8-2" fill="#fff" stroke="#111" strokeWidth="1.700" /><path d="M2 4l6-3 8 10-5 4z" fill="#5d6fc0" stroke="#242c70" /><path d="M3 7l6-4M6 10l6-4M8 13l6-4" stroke="#c8d0f4" /></g>,
  drillop: <path d="M3 3h8v6l4 4 6-6v14H3z" fill="#fff" stroke="#11114c" strokeWidth="2" />,
  check: <g fill="#2fc840" stroke="#18962a" strokeWidth=".8">{tick}</g>,
  up: <path d="M4 18l8-12 8 12" fill="none" stroke="#3f87b0" strokeWidth="4" />,
  reset: <path d="M18 4c7 8 1 17-7 17S-1 12 6 6M11 12V5H4" fill="none" stroke="currentColor" strokeWidth="2.800" />,
  close: <path d="M3 3l18 18M21 3L3 21" stroke="currentColor" strokeWidth="3" />,
  restore: <path d="M7 9V4h15v10h-5M2 10h15v9H2zM2 12h15M7 5h15" fill="none" stroke="currentColor" strokeWidth="2" />,
  min: <path d="M3 20h18" stroke="currentColor" strokeWidth="4" />,
  pointctor: <g><path d="M14 1v13M8 8h13" stroke="#111" strokeWidth="2" /><path d="M2 12c0 4 2 6 5 6v-3l5 5-5 4v-3C2 21 0 17 2 12z" fill="#e0822c" /><path d="M13 21h2M17 21h2M21 21h2" stroke="#111" strokeWidth="2.500" /></g>,
  distA: <g><path d="M1 5v10M23 5v10M2 10h20" stroke="#a81818" strokeWidth="1.500" /><path d="M2 10l4-2.500v5zM22 10l-4-2.500v5z" fill="#a81818" /><path d="M10 2l4 5M14 2l-4 5" stroke="#a81818" /><circle cx="2.500" cy="20" r="2.300" fill="#b02020" /><path d="M7 20h16" stroke="#111" strokeWidth="1.400" /></g>,
  distB: <g><path d="M1 5v10M22 5v10M2 10h20" stroke="#a81818" strokeWidth="1.500" /><path d="M2 10l4-2.500v5zM21 10l-4-2.500v5z" fill="#a81818" /><path d="M10 2l4 5M14 2l-4 5" stroke="#a81818" /><circle cx="21.500" cy="20" r="2.300" fill="#b02020" /><path d="M1 20h17" stroke="#111" strokeWidth="1.400" /></g>,
  orgview: <g><g transform="translate(-2 -5) scale(.8)">{chip}</g><path d="M15 11h4v4h-4zM18 18h5v4h-5zM16 15v5h2M19 13h3v5" fill="none" stroke={G} /></g>,
  cloud: <g fill="none" stroke="#fff" strokeWidth="3.500"><circle cx="12" cy="7" r="4" /><circle cx="6" cy="15" r="4" /><circle cx="18" cy="15" r="4" /></g>,
  mfg: <g><path d="M2 1h9v14l-4 5-5-5z" fill="#3b4fc0" stroke="#222a70" /><path d="M12 7h11M12 11h8M12 15h6" stroke="#555" strokeWidth="1.700" /><path d="M1 21l6-4 6 4-6 3z" fill="#e8d060" /></g>,
  full: <g fill="none"><path d="M1 6V1h5M18 1h5v5M23 18v5h-5M6 23H1v-5" stroke="#888" strokeWidth="1.500" /><rect x="5" y="5" width="14" height="14" fill="#fff" stroke="#555" strokeWidth="1.500" /><path d="M8 9h8v7H8z" fill="#6d94cf" /></g>,
  plus: <g><circle cx="12" cy="13" r="10.500" fill="#3a7fd2" /><path d="M12 7v12M6 13h12" stroke="#fff" strokeWidth="2.500" /><circle cx="19" cy="4" r="5" fill="#d83030" /></g>,
};

const Icon = ({ n, s = 24 }: IconProps) => (
  <svg width={s} height={s} viewBox="0 0 24 24" aria-hidden="true" overflow="visible">
    {art[n]}
  </svg>
);

/* ---------- data ---------- */
const menus: [string, string][] = [
  ["文件", "F"], ["编辑", "E"], ["视图", "V"], ["插入", "S"], ["格式", "R"], ["工具", "T"], ["装配", "A"],
  ["信息", "I"], ["分析", "L"], ["首选项", "P"], ["窗口", "O"], ["GC工具箱", ""], ["帮助", "H"],
];

type Feat = [icon: string, label: string, drop?: boolean, dark?: boolean];
const Features = ({ items }: { items: Feat[] }) => (
  <>
    {items.map(([i, label, drop, dark]) => (
      <React.Fragment key={label}>
        <Feature $dark={dark}>
          <Icon n={i} />
          <span>{label}</span>
        </Feature>
        {drop && <SideDrop aria-label={label + " 选项"} />}
      </React.Fragment>
    ))}
  </>
);

type Node = { t: string; lvl: 0 | 1 | 2; icon?: string; box?: boolean; last?: boolean; tail?: boolean; ok?: boolean; sel?: boolean; first?: boolean };
const nodes: Node[] = [
  { t: "GENERIC_MACHINE", lvl: 0 },
  { t: "未用项", lvl: 1, icon: "folder", first: true },
  { t: "M30R1", lvl: 1, icon: "holder", box: true },
  { t: "R1", lvl: 2, icon: "mill", ok: true },
  { t: "R2", lvl: 2, icon: "mill", ok: true, last: true },
  { t: "M16R1", lvl: 1, icon: "holder", box: true },
  { t: "F1-D", lvl: 2, icon: "mill", ok: true },
  { t: "F1-C", lvl: 2, icon: "mill", ok: true, sel: true },
  { t: "F2-D", lvl: 2, icon: "mill", ok: true },
  { t: "F2-C", lvl: 2, icon: "mill", ok: true, last: true },
  { t: "SPOTDRILLING_TOOL", lvl: 1, icon: "drill", box: true },
  { t: "SPOT", lvl: 2, icon: "drillop", ok: true, last: true },
  { t: "M16", lvl: 1, icon: "holder", tail: true },
];

const Guide = ({ n }: { n: Node }) => {
  const w = n.lvl === 1 ? 21 : 40;
  return (
    <svg width={w} height="20" aria-hidden="true" overflow="visible" fill="none" stroke="#999" strokeDasharray="1 1">
      <path d={`M10.500 ${n.first ? 10 : 0}V${n.tail ? 10 : 20}`} />
      {n.lvl === 1 && <path d="M11 10.500h8" />}
      {n.lvl === 2 && <path d={`M29.500 0V${n.last ? 10 : 20}M30 10.500h8`} />}
      {n.box && (
        <g strokeDasharray="none">
          <rect x="6.500" y="6.500" width="8" height="8" fill="#fff" stroke="#bbb" />
          <path d="M8 10.500h5" stroke="#222" />
        </g>
      )}
    </svg>
  );
};

type Cell = [width: number, text: string];
const listing: { h: number; c: Cell[] }[] = [
  { h: 16, c: [[0, "=".repeat(60)]] },
  { h: 17, c: [[112, "信息列表创建者:"], [0, "Administrator"]] },
  { h: 17, c: [[242, "日期"], [21, ":"], [0, "2020-03-14 16:20:00"]] },
  { h: 17, c: [[99, "当前工作部件:"], [0, "D:\\123.prt"]] },
  { h: 17, c: [[215, "节点名"], [21, ":"], [0, "pc-20170810xbco"]] },
  { h: 16, c: [[0, "=".repeat(60)]] },
  { h: 17, c: [[0, "曲面 - 曲线  最小值 距离"]] },
  { h: 16, c: [] },
  { h: 17, c: [[147, "信息单位"], [0, "MilliMeter"]] },
  { h: 16, c: [] },
  { h: 17, c: [[146, "3D 距离"], [48, "="], [0, "7.999156705"]] },
  { h: 16, c: [] },
  { h: 17, c: [[146, "2D 距离 (WCS Xy)"], [48, "="], [0, "1.184562467"]] },
  { h: 17, c: [[146, "2D 距离 (WCS Yz)"], [48, "="], [0, "7.993226347"]] },
  { h: 17, c: [[146, "2D 距离 (WCS Xz)"], [48, "="], [0, "7.916953980"]] },
  { h: 16, c: [] },
  { h: 17, c: [[143, "第一点"], [56, "XC ="], [183, "372.164693378"], [49, "X ="], [0, "372.164693378"]] },
  { h: 16, c: [[176, ""], [56, "YC ="], [184, "-98.412531392"], [48, "Y ="], [0, "-98.412531392"]] },
  { h: 16, c: [[176, ""], [64, "ZC ="], [176, "17.747500082"], [56, "Z ="], [0, "17.747500082"]] },
  { h: 16, c: [] },
  { h: 17, c: [[143, "第二点"], [56, "XC ="], [183, "372.472655329"], [49, "X ="], [0, "372.472655329"]] },
];

const SceneDrawing = () => {
  const edge = { fill: "none", stroke: "#3a2600", strokeWidth: 0.8 };
  const cyl = "M1178 270L1368 293L1327 639C1326 648 1321 651 1312 650L1150 631C1140 629 1136 624 1137 615Z";
  return (
    <Scene viewBox="364 190 1236 616" preserveAspectRatio="xMaxYMin slice" role="img" aria-label="刀具与工件三维视图">
      <defs>
        <linearGradient id="face" gradientUnits="userSpaceOnUse" x1="1060" y1="620" x2="1400" y2="420">
          <stop offset="0" stopColor="#a86600" />
          <stop offset=".28" stopColor="#c67700" />
          <stop offset=".6" stopColor="#e08600" />
          <stop offset="1" stopColor="#ee8f00" />
        </linearGradient>
        <linearGradient id="cyl" gradientUnits="userSpaceOnUse" x1="1157" y1="440" x2="1348" y2="463">
          <stop offset="0" stopColor="#d0a800" stopOpacity=".78" />
          <stop offset=".12" stopColor="#e8c000" stopOpacity=".72" />
          <stop offset=".45" stopColor="#ffd600" stopOpacity=".72" />
          <stop offset=".68" stopColor="#fbd000" stopOpacity=".74" />
          <stop offset=".9" stopColor="#d0a600" stopOpacity=".78" />
          <stop offset="1" stopColor="#b89400" stopOpacity=".84" />
        </linearGradient>
        <linearGradient id="ground" gradientUnits="userSpaceOnUse" x1="950" y1="440" x2="1300" y2="800">
          <stop offset="0" stopColor="#ff9c00" />
          <stop offset="1" stopColor="#ffa500" />
        </linearGradient>
        <clipPath id="inCyl"><path d={cyl} /></clipPath>
      </defs>
      <path d="M364 560L908 540L975 536L978 527L1009 486L1040 452L1071 426L1110 405L1147 394L1263 367L1303 354L1340 352L1369 355L1427 494L1503 474L1600 440V810H364Z" fill="url(#ground)" />
      <path d="M1097 548L1120 510L1153 465L1165 448L1198 412L1238 380L1263 367L1303 354L1340 352L1369 355L1427 494L1343 517Q1240 548 1139 627L1054 711Z" fill="url(#face)" />
      <g {...edge}>
        <path d="M908 540L975 536M978 527L1009 486L1040 452L1071 426L1110 405L1147 394M978 527L1097 548M978 527L947 644L908 634" />
        <path d="M1427 494L1369 355L1340 352L1303 354L1263 367L1238 380L1198 412L1165 448L1153 465L1120 510L1097 548L1054 711L1405 806" />
      </g>
      <path d="M1143 739Q1230 636 1290 585T1427 494L1495 476" fill="none" stroke="#40e4d2" strokeWidth="3" />
      <path d={cyl} fill="url(#cyl)" />
      <g clipPath="url(#inCyl)">
        <path d="M1143 739Q1230 636 1290 585T1427 494" fill="none" stroke="#b4cc30" strokeWidth="3" opacity=".8" />
        <path d="M1137 617L1327 639L1325 650H1130Z" fill="#dcb800" opacity=".5" />
      </g>
      <g {...edge}>
        <path d="M1178 270L1368 293M1178 270Q1260 290 1366 294M1137 617L1327 640M1139 616Q1240 634 1325 637M1148 631L1314 650" />
      </g>
      <path d="M1277 248L1228 663" stroke="#f6a254" strokeWidth="3" strokeDasharray="28 5 4 5" strokeDashoffset="14" fill="none" />
      <g transform="translate(1153 463) rotate(7.200)">
        <rect x="0" y="0" width="98" height="33" fill="#c9a830" fillOpacity=".65" stroke="#b8b49a" strokeWidth="2" />
        <rect x="0" y="4" width="95" height="6" fill="#a81818" />
        <path d="M0 7H95" stroke="#d07030" strokeWidth="3" strokeDasharray="1 2" opacity=".6" />
        {[0, 1, 2, 3, 4, 5, 6, 7].map((i) => (
          <g key={i}>
            <path d={`M${i * 12 + 1} 4v12`} stroke="#a01010" strokeWidth="2" />
            <text x={i * 12 + 2} y="29" fontSize="11" fontFamily="Liberation Sans, sans-serif" fill="#a83820" textAnchor="middle">{i}</text>
          </g>
        ))}
      </g>
      <path d="M1247 347L1143 740" stroke="#1c1478" strokeWidth="3" strokeDasharray="5 4" fill="none" />
      <path d="M1408 186L1521 464" stroke="#1c18c0" strokeWidth="3" strokeDasharray="5 4" fill="none" />
      <path d="M1392 670v5" stroke="#c8c800" strokeWidth="2" strokeDasharray="2 1" />
    </Scene>
  );
};

export default function App() {
  return (
    <Shell>
      <Global />
      <TitleBar>
        <NxMark>NX</NxMark>
        <TitleText>NX 10.0.3.5 - 加工 - [123.prt （修改的） ]</TitleText>
        <Brand>SIEMENS</Brand>
        <WinButtons $gap={11}>
          <button aria-label="最小化"><Icon n="min" s={10} /></button>
          <button aria-label="还原"><Icon n="restore" s={13} /></button>
          <button aria-label="关闭"><Icon n="close" s={12} /></button>
        </WinButtons>
      </TitleBar>

      <MenuBar>
        <Grip />
        <Icon n="mfg" s={14} />
        <MenuItems>
          {menus.map(([t, k]) => (
            <MenuItem key={t} $wide={t === "首选项"}>
              {t}
              {k && <>(<u>{k}</u>)</>}
            </MenuItem>
          ))}
        </MenuItems>
        <Upload>
          <UploadMark><Icon n="cloud" s={19} /></UploadMark>
          <span>拖拽上传</span>
        </Upload>
        <WinButtons $gap={8}>
          <button aria-label="最小化文档"><Icon n="min" s={9} /></button>
          <button aria-label="还原文档"><Icon n="restore" s={12} /></button>
          <button aria-label="关闭文档"><Icon n="close" s={10} /></button>
        </WinButtons>
      </MenuBar>

      <Bar $h={35}>
        <Group $line>
          <Grip />
          <Launch><Icon n="globe" /><span>启动</span><Drop as="i" /></Launch>
          <Tool aria-label="新建"><Icon n="newdoc" s={22} /></Tool>
          <Tool aria-label="打开"><Icon n="open" s={22} /></Tool>
          <Tool aria-label="保存"><Icon n="save" s={22} /></Tool>
          <Sep />
          <Tool aria-label="剪切"><Icon n="cut" s={22} /></Tool>
          <Tool aria-label="复制"><Icon n="copy" s={22} /></Tool>
          <Tool aria-label="粘贴"><Icon n="paste" s={22} /></Tool>
          <Tool aria-label="删除"><Icon n="del" s={20} /></Tool>
          <Sep />
          <Tool aria-label="撤消"><Icon n="undo" s={22} /></Tool>
          <Drop $w={14} aria-label="撤消列表" />
          <Sep />
          <Tool aria-label="测量"><Icon n="ruler" /></Tool>
          <Drop $w={14} aria-label="测量列表" />
          <Sep />
          <Search><input aria-label="查找命令" placeholder="查找命令" /><Icon n="lens" s={16} /></Search>
          <Drop $w={18} $low aria-label="更多" />
        </Group>
        <Group $line>
          <Grip />
          <Tool $w={28} aria-label="适合窗口"><Icon n="fit" s={22} /></Tool><Drop $w={14} aria-label="视图" />
          <Tool $w={30} aria-label="定向"><Icon n="bracket" /></Tool><Drop $w={13} aria-label="定向列表" />
          <Tool $w={30} aria-label="着色"><Icon n="cube" /></Tool><Drop aria-label="着色列表" />
          <Tool aria-label="背景"><Icon n="screen" /></Tool><Drop aria-label="背景列表" />
          <Sep />
          <Tool aria-label="剖切"><Icon n="door" /></Tool>
          <Tool aria-label="编辑剖切"><Icon n="door2" /></Tool>
          <Drop $w={13} $low aria-label="更多视图" />
        </Group>
        <Group $line>
          <Grip />
          <Tool aria-label="检查"><Icon n="gauge" /></Tool>
          <Sep />
          <Tool aria-label="翻转"><Icon n="flip" /></Tool><Drop aria-label="翻转列表" />
          <Sep />
          <Tool aria-label="测量距离"><Icon n="rungs" /></Tool><Drop aria-label="距离列表" />
          <Tool aria-label="标尺"><Icon n="ruler" /></Tool>
          <Drop $w={13} $low aria-label="更多分析" />
        </Group>
      </Bar>

      <Bar $h={69} $line>
        <Group>
          <Grip $w={7} />
          <Features items={[["prog", "创建程序"], ["toolnew", "创建刀具"], ["geom", "创建几何体"], ["opnew", "创建工序"]]} />
          <GroupEnd $w={14}><span /><Drop as="i" /></GroupEnd>
        </Group>
        <Group>
          <Grip $w={7} />
          <Features items={[["gen", "生成刀轨"], ["verify", "确认刀轨"], ["list", "列出刀轨"], ["sim", "机床仿真"]]} />
          <Sep $w={2} />
          <Features items={[["post", "后处理"], ["shop", "车间文档"]]} />
          <GroupEnd $w={15}><span /><Drop as="i" /></GroupEnd>
        </Group>
        <Group>
          <Grip $w={7} />
          <Features items={[["torch", "显示刀轨"], ["replay", "重播刀轨"], ["hatch", "显示切削移动"], ["hatch2", "显示非切削移动"], ["center", "显示刀具中心"], ["endpt", "终点"]]} />
          <GroupEnd $w={31}><span>»</span><Drop as="i" /></GroupEnd>
        </Group>
        <Group>
          <Grip $w={7} />
          <Features items={[["ipwsel", "选择 2D IPW"], ["ipw", "显示 2D IPW", true], ["ipwfill", "显示填充 2D IPW", true], ["ipw3d", "显示 3D IPW", true]]} />
          <GroupEnd $w={14}><span /><Drop as="i" /></GroupEnd>
        </Group>
        <Group>
          <Grip $w={7} />
          <Macro aria-label="P"><Icon n="macro" s={22} /></Macro>
          <GroupEnd $w={20}><span /><Drop as="i" /></GroupEnd>
        </Group>
      </Bar>

      <SelectBar $h={31}>
        <Combo $w={133} $h={20}><select aria-label="选择过滤器"><option>无选择过滤器</option></select></Combo>
        <Combo $w={140} $h={20} $gap><select aria-label="选择范围"><option>整个装配</option></select></Combo>
        <Tool $w={26} aria-label="装配"><Icon n="asm" s={18} /></Tool>
        <Sep $w={1} />
        <Tool $w={25} aria-label="过滤"><Icon n="hand" s={16} /></Tool>
        <Tool $w={18} aria-label="细节过滤"><Icon n="pickbox" s={17} /></Tool>
        <Drop $w={16} aria-label="过滤列表" />
        <Tool $w={20} aria-label="重选"><Icon n="retarget" s={17} /></Tool>
        <Tool $w={24} aria-label="路径"><Icon n="trail" s={17} /></Tool>
        <Sep $w={2} />
        <Tool $w={24} aria-label="矩形选择"><Icon n="lasso" s={18} /></Tool>
        <Drop $w={13} aria-label="选择列表" />
        <Sep $w={2} />
        <Tool $w={24} aria-label="着色显示"><Icon n="shaded" s={17} /></Tool>
        <Tool $w={23} aria-label="实体"><Icon n="bluecube" s={17} /></Tool>
        <Sep $w={2} />
        <Tool $w={23} $on aria-label="启用捕捉"><Icon n="snapall" s={17} /></Tool>
        <Tool $w={23} $on aria-label="终点"><Icon n="snapend" s={16} /></Tool>
        <Tool $w={23} $on aria-label="中点"><Icon n="snapmid" s={16} /></Tool>
        <Tool $w={23} aria-label="控制点"><Icon n="snapctl" s={17} /></Tool>
        <Tool $w={23} aria-label="交点"><Icon n="snapint" s={17} /></Tool>
        <Tool $w={23} $on aria-label="圆弧中心"><Icon n="snaparc" s={16} /></Tool>
        <Tool $w={23} aria-label="象限点"><Icon n="snapquad" s={17} /></Tool>
        <Tool $w={23} $on aria-label="现有点"><Icon n="snappt" s={16} /></Tool>
        <Tool $w={23} $on aria-label="曲线上的点"><Icon n="snapcrv" s={16} /></Tool>
        <Tool $w={23} aria-label="面上的点"><Icon n="snapface" s={17} /></Tool>
        <Sep $w={2} />
        <Tool $w={24} aria-label="栅格"><Icon n="snapgrid" s={16} /></Tool>
        <Push />
        <Drop $low aria-label="选择条选项" />
      </SelectBar>

      <Main>
        <Rail>
          <RailTab $h={26} aria-label="设置"><Icon n="gear" s={13} /></RailTab>
          <RailTab $h={72} aria-label="装配导航器"><Icon n="asmnav" s={22} /></RailTab>
          <RailTab $h={26} aria-label="约束导航器"><Icon n="constr" s={22} /></RailTab>
          <RailTab $h={43} aria-label="部件导航器"><Icon n="partnav" s={22} /></RailTab>
          <RailTab $h={45} $on aria-label="工序导航器"><Icon n="opnav" s={22} /></RailTab>
          <RailTab $h={40} aria-label="机床导航器"><Icon n="mtool" /></RailTab>
          <RailTab $h={42} aria-label="加工特征"><Icon n="machine" /></RailTab>
          <RailTab $h={42} aria-label="重用库"><Icon n="books" /></RailTab>
          <RailTab $h={64} aria-label="HD3D"><Icon n="info" /></RailTab>
          <RailTab $h={46} aria-label="浏览器"><Icon n="page" s={22} /></RailTab>
          <RailTab $h={62} aria-label="历史"><Icon n="clock" s={22} /></RailTab>
          <RailTab $h={24} aria-label="可视化"><Icon n="visual" s={24} /></RailTab>
          <RailTab $h={24} aria-label="分隔"><Icon n="wave" s={26} /></RailTab>
          <svg width="31" height="60" aria-hidden="true">
            <g fill="#aaa"><path d="M12 5l4-4 4 4zM12 6h8v1h-8zM12 21l4-4 4 4z" /></g>
            <g fill="#222"><path d="M12 33h7l-3 4zM12 48h8v1h-8zM12 51h7l-3 4z" /></g>
          </svg>
        </Rail>

        <Navigator>
          <NavTitle>工序导航器 - 机床<i /></NavTitle>
          <TreeBox>
            <Tree>
              <colgroup><col width="201" /><col width="100" /><col /></colgroup>
              <thead><tr><th>名称</th><th>刀轨</th><th>刀具</th></tr></thead>
              <tbody>
                {nodes.map((n) => (
                  <TreeRow key={n.t} $sel={n.sel}>
                    <td>
                      <NodeCell>
                        {n.lvl > 0 && <Guide n={n} />}
                        {n.lvl === 2 && <Icon n="bang" s={15} />}
                        {n.icon && <Icon n={n.icon} s={n.lvl === 1 ? 15 : 17} />}
                        <NodeLabel $sel={n.sel}>{n.t}</NodeLabel>
                      </NodeCell>
                    </td>
                    <td>{n.ok && <CheckCell><Icon n="check" s={13} /></CheckCell>}</td>
                    <td>{n.ok && <NodeLabel $sel={n.sel}>M16R1</NodeLabel>}</td>
                  </TreeRow>
                ))}
                {Array.from({ length: 13 }, (_, i) => (
                  <TreeRow key={i}><td /><td /><td /></TreeRow>
                ))}
              </tbody>
            </Tree>
          </TreeBox>
          <HScroll><i /><b /></HScroll>
          <NavFoot />
        </Navigator>

        <Viewport>
          <SceneDrawing />
          <Readout><i />=7.9992 mm</Readout>
          <NetWidget>
            <Ball>42%</Ball>
            <Rates>
              <div><svg width="7" height="15" viewBox="0 0 7 15"><path d="M3.500 4v7M1 6l2.500-3L6 6" fill="none" stroke="#d84838" strokeWidth="1.500" /></svg>0K/s</div>
              <div><svg width="7" height="15" viewBox="0 0 7 15"><path d="M3.500 3v7M1 8l2.500 3L6 8" fill="none" stroke="#2a9048" strokeWidth="1.500" /></svg>0K/s</div>
            </Rates>
            <Icon n="plus" s={18} />
          </NetWidget>

          <Dialog aria-label="测量距离">
            <DialogTitle>
              <Icon n="gear" s={14} />
              <span>测量距离</span>
              <button aria-label="重置"><Icon n="reset" s={12} /></button>
              <button aria-label="关闭"><Icon n="close" s={12} /></button>
            </DialogTitle>
            <DialogBody>
              <Sections>
                <Section $h={65}>
                  <SectionHead>类型<Icon n="up" s={12} /></SectionHead>
                  <TypeCombo $w={298} $h={26}><Icon n="bridge" s={15} /><select aria-label="类型"><option>距离</option></select></TypeCombo>
                </Section>
                <Section $h={71}>
                  <SectionHead>起点<Icon n="up" s={12} /></SectionHead>
                  <PickRow>
                    <Pick><Icon n="check" s={13} />选择点或对象 (1)</Pick>
                    <BoxButton $s={24} aria-label="点构造器"><Icon n="pointctor" s={17} /></BoxButton>
                    <BoxButton $s={32} aria-label="起点测量"><Icon n="distA" s={22} /></BoxButton>
                  </PickRow>
                </Section>
                <Section $h={71}>
                  <SectionHead>终点<Icon n="up" s={12} /></SectionHead>
                  <PickRow>
                    <Pick $on><Icon n="check" s={13} />选择点或对象 (1)</Pick>
                    <BoxButton $s={24} aria-label="终点构造器"><Icon n="pointctor" s={17} /></BoxButton>
                    <BoxButton $s={32} $on aria-label="终点测量"><Icon n="distB" s={22} /></BoxButton>
                  </PickRow>
                </Section>
                <Section $h={80}>
                  <SectionHead>测量<Icon n="up" s={12} /></SectionHead>
                  <TypeCombo $w={298} $h={26}><select aria-label="距离"><option>最小值</option></select></TypeCombo>
                </Section>
              </Sections>
              <DialogScroll><Arrow /><b /></DialogScroll>
            </DialogBody>
          </Dialog>
        </Viewport>

        <InfoWindow aria-label="信息">
          <InfoTitle>
            <em>i</em>
            <span>信息</span>
            <Caption>
              <CaptionButton aria-label="最小化窗口"><svg width="12" height="14"><rect x=".5" y="7.500" width="11" height="4" fill="#fff" stroke="#556" /></svg></CaptionButton>
              <CaptionButton aria-label="最大化窗口"><svg width="12" height="12"><path fillRule="evenodd" d="M.5.500h11v10H.5zM4 4v3.500h4V4z" fill="#fff" stroke="#556" /></svg></CaptionButton>
              <CaptionButton $close aria-label="关闭窗口"><svg width="12" height="12"><path d="M2 2l8 8M10 2l-8 8" stroke="#654" strokeWidth="4" /><path d="M2 2l8 8M10 2l-8 8" stroke="#fff" strokeWidth="2.500" /></svg></CaptionButton>
            </Caption>
          </InfoTitle>
          <InfoFrame>
            <InfoMenu><button>文件(F)</button><button>编辑(E)</button></InfoMenu>
            <InfoBody>
              <Listing>
                {listing.map((l, i) => (
                  <Line key={i} $h={l.h}>
                    {l.c.map(([w, t], j) => (
                      <Col key={j} $w={w}>{t}</Col>
                    ))}
                  </Line>
                ))}
              </Listing>
              <InfoScroll><Arrow /><b /><Push /><Arrow $down /></InfoScroll>
            </InfoBody>
          </InfoFrame>
        </InfoWindow>
      </Main>

      <Footer>
        <BottomBar $h={70}>
          <Group>
            <Grip $w={7} />
            <Features items={[["orgview", "程序顺序视图"], ["orgview", "机床视图"], ["orgview", "几何视图"], ["orgview", "加工方法视图"]]} />
            <GroupEnd $w={14}><span /><Drop as="i" /></GroupEnd>
          </Group>
          <Group>
            <Grip $w={7} />
            <Features items={[["geom", "数模分析", true], ["geom", "WAVE 几何链接器"], ["endpt", "点", true], ["geom", "抽取几何特征", true], ["geom", "修补开口"], ["geom", "同步建模工具条", false, true], ["geom", "小平面化"]]} />
            <GroupEnd $w={26}><span /><Drop as="i" /></GroupEnd>
          </Group>
        </BottomBar>
        <Status>
          <StatusText>选择第二点或对象来测量距离</StatusText>
          <Icon n="full" s={16} />
        </Status>
        <TaskEdge />
        <HexMark width="74" height="82" viewBox="0 0 74 82" aria-hidden="true">
          <g stroke="#fff" strokeWidth="1">
            <path d="M12 15L37 1L51 8Q57 18 56 30L37 18Q26 11 12 15z" fill="#d4eefc" />
            <path d="M51 7L73 20V34Q69 46 56 53V30Q57 17 51 7z" fill="#8ad5f8" />
            <path d="M73 34V61L59 69Q48 70 37 64L56 53Q68 46 73 34z" fill="#78c6ee" />
            <path d="M60 68L37 81L22 73Q17 66 17 53L37 64Q48 70 60 68z" fill="#78cdf6" />
            <path d="M22 73L1 61V48Q5 36 17 30V53Q17 65 22 73z" fill="#a2dbf8" />
            <path d="M1 48V20L13 14Q27 12 37 18L17 30Q5 36 1 48z" fill="#b9e5fb" />
            <path d="M37 18L56 30V53L37 64L17 53V30z" fill="#fff" />
            <path d="M37 22L53 31L37 40L21 31z" fill="#b9e5fb" />
            <path d="M21 31L37 40V59L21 50z" fill="#a2dbf8" />
            <path d="M53 31L37 40V59L53 50z" fill="#78c6ee" />
          </g>
        </HexMark>
      </Footer>
    </Shell>
  );
}
